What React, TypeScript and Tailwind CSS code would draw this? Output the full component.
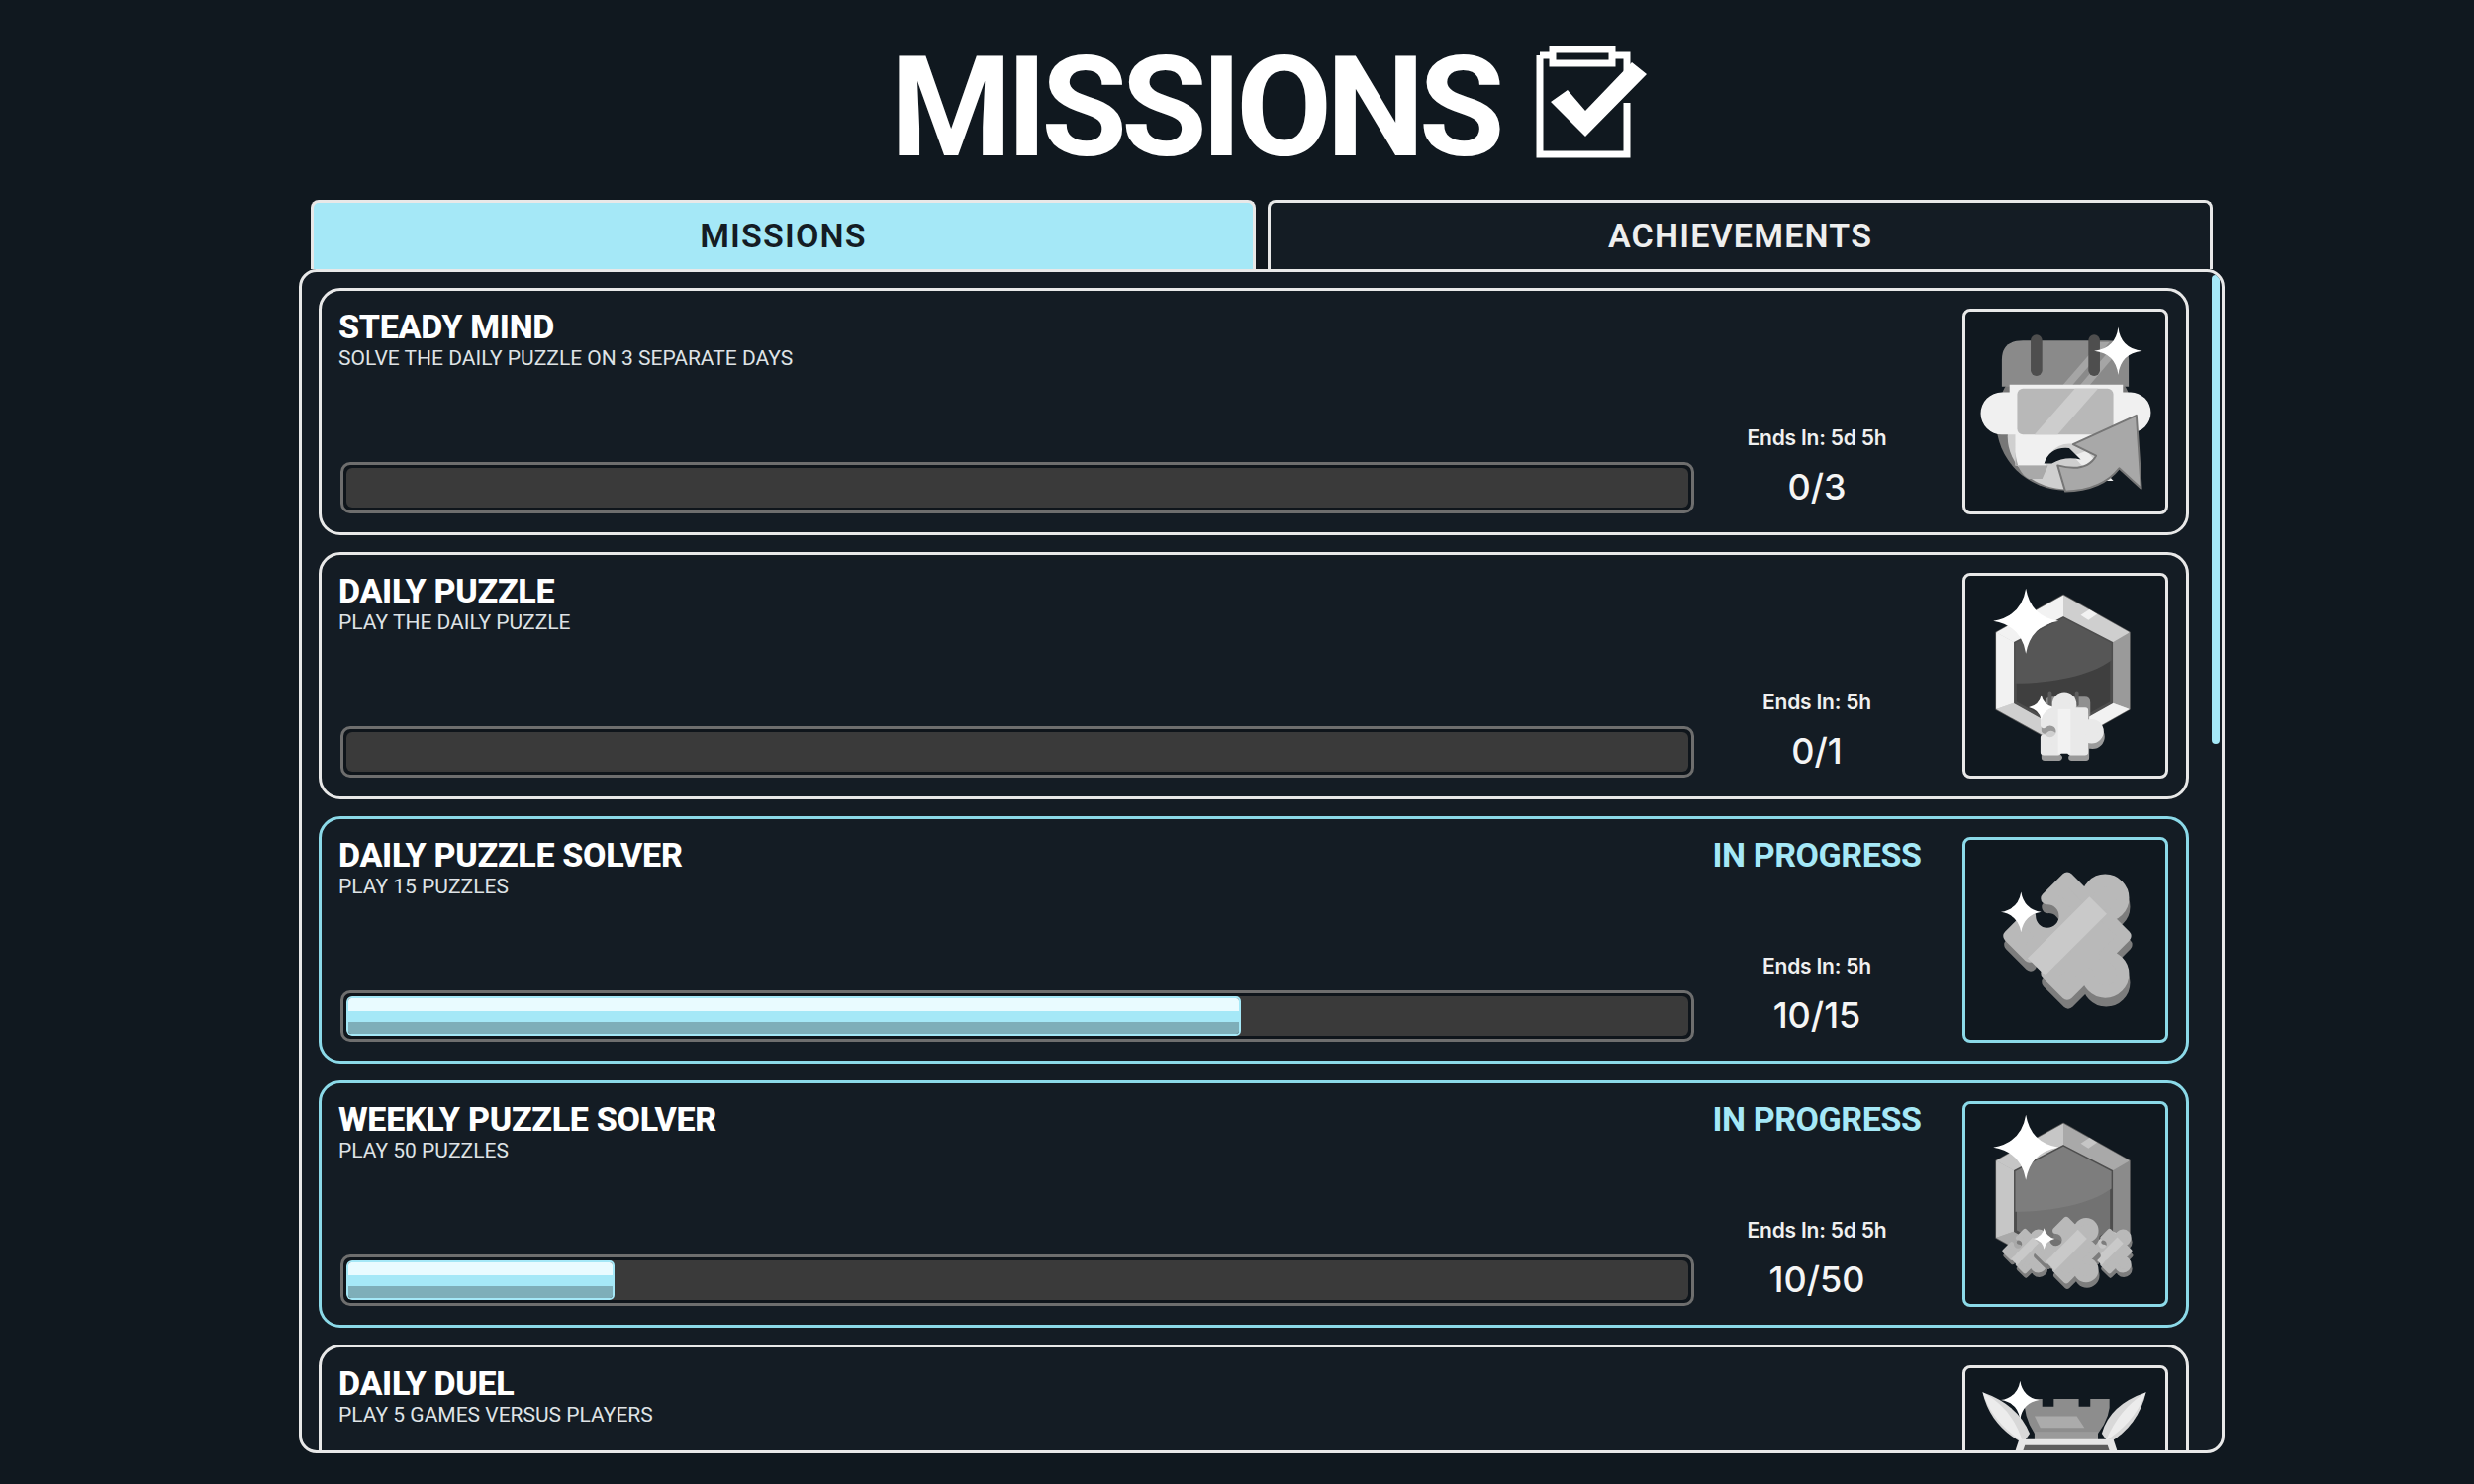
import { FunctionComponent } from "react";

const PIECE =
  "M20 30H41a13 13 0 1 1 18 0H80V51a13 13 0 1 1 0 18V90H59a13 13 0 1 0-18 0H20V69a13 13 0 1 0 0-18Z";

const Sparkle = ({ x, y, r, w = 0.14 }: { x: number; y: number; r: number; w?: number }) => {
  const c = r * w;
  return (
    <path
      fill="#fff"
      d={`M${x} ${y - r}Q${x + c} ${y - c} ${x + r} ${y}Q${x + c} ${y + c} ${x} ${y + r}Q${x - c} ${y + c} ${x - r} ${y}Q${x - c} ${y - c} ${x} ${y - r}Z`}
    />
  );
};

const Puzzle = ({
  x,
  y,
  s,
  rot = 45,
  fill = "#b9b9b9",
  side = "#7d7d7d",
  stripe = "#c9c9c9",
}: {
  x: number;
  y: number;
  s: number;
  rot?: number;
  fill?: string;
  side?: string;
  stripe?: string;
}) => (
  <g>
    <g transform={`translate(${x + 1} ${y + 5 * s + 2}) rotate(${rot}) scale(${s}) translate(-50 -60)`}>
      <path d={PIECE} fill={side} stroke={side} strokeWidth="9" strokeLinejoin="round" />
    </g>
    <g transform={`translate(${x} ${y}) rotate(${rot}) scale(${s}) translate(-50 -60)`}>
      <path d={PIECE} fill={fill} stroke={fill} strokeWidth="9" strokeLinejoin="round" />
      <path d="M41 28H59V92H41Z" fill={stripe} />
    </g>
  </g>
);

const Hexagon = ({
  rim,
  rimLight,
  rimDark,
  inner,
  gloss,
}: {
  rim: string;
  rimLight: string;
  rimDark: string;
  inner: string;
  gloss: string;
}) => (
  <g>
    <path d="M102 20L171 59V139L102 178L32 139V59Z" fill={rim} stroke="#5a5a5a" strokeWidth="1.5" strokeLinejoin="round" />
    <path d="M102 20L102 44L52 70L32 59Z" fill={rimLight} />
    <path d="M102 20L171 59L152 70L102 44Z" fill={rim} />
    <path d="M129 35L137 40L128 46L120 41Z" fill={rimLight} />
    <path d="M171 59V139L152 132V70Z" fill={rimDark} />
    <path d="M32 59V139L52 132V70Z" fill={rimLight} />
    <path d="M32 139L102 178V160L52 132Z" fill={rim} />
    <path d="M171 139L102 178V160L152 132Z" fill={rimLight} />
    <path d="M102 44L152 70V132L102 160L52 132V70Z" fill={inner} stroke="#4d4d4d" strokeWidth="3" />
    <path d="M102 44L152 70V88C130 104 90 112 52 112V70Z" fill={gloss} />
  </g>
);

const BadgeCalendar = () => (
  <svg viewBox="0 0 208 208" className="h-full w-full">
    <circle cx="104" cy="114" r="72" fill="#777777" />
    <ellipse cx="106" cy="130" rx="62" ry="55" fill="#cfcfcf" />
    <path d="M112 150L126 145L154 176H136Z" fill="#ededed" />
    <path d="M38 78V50Q38 30 60 30H148Q170 30 170 50V78Z" fill="#8a8a8a" />
    <path d="M100 78L140 32H150L110 78ZM118 78L152 38H162L128 78Z" fill="#a5a5a5" />
    <rect x="68" y="24" width="12" height="43" rx="6" fill="#4e4e4e" />
    <rect x="128" y="24" width="12" height="43" rx="6" fill="#4e4e4e" />
    <path d="M46 76H164V84H172A21 21 0 0 1 172 126H164V138L122 142A24 24 0 0 0 84 160H52V128H38A22 22 0 0 1 38 84H46Z" fill="#f0f0f0" />
    <path d="M52 146V160H86L80 174H66Q54 168 52 146Z" fill="#a9a9a9" />
    <rect x="54" y="80" width="100" height="48" rx="6" fill="#b8b8b8" />
    <path d="M72 128L114 80H138L96 128Z" fill="#cdcdcd" />
    <path d="M178 108L183 184L160 163Q142 186 104 187L96 160Q126 168 136 150L112 138Z" fill="#a8a8a8" stroke="#767676" strokeWidth="2" strokeLinejoin="round" />
    <path d="M82 158Q88 140 108 142L120 154Q104 150 90 158Z" fill="#10181f" />
    <Sparkle x={159} y={41} r={25} w={0.1} />
  </svg>
);

const BadgeHexPuzzle = () => (
  <svg viewBox="0 0 208 208" className="h-full w-full">
    <Hexagon rim="#cfcfcf" rimLight="#f2f2f2" rimDark="#9a9a9a" inner="#3f3f3f" gloss="#565656" />
    <path d="M83 146V132Q83 126 90 126H124Q130 126 130 132V146Z" fill="#8f8f8f" />
    <rect x="86" y="120" width="4" height="16" rx="2" fill="#5e5e5e" />
    <rect x="114" y="120" width="4" height="16" rx="2" fill="#5e5e5e" />
    <Puzzle x={103} y={162} s={0.72} rot={0} fill="#e9e9e9" side="#9a9a9a" stripe="#f2f2f2" />
    <Sparkle x={79} y={137} r={13} w={0.18} />
    <Sparkle x={63} y={47} r={34} w={0.14} />
  </svg>
);

const BadgePuzzle = () => (
  <svg viewBox="0 0 208 208" className="h-full w-full">
    <Puzzle x={106} y={100} s={1.42} />
    <Sparkle x={58} y={75} r={21} />
  </svg>
);

const BadgeHexPuzzles = () => (
  <svg viewBox="0 0 208 208" className="h-full w-full">
    <Hexagon rim="#a9a9a9" rimLight="#c6c6c6" rimDark="#8b8b8b" inner="#727272" gloss="#7d7d7d" />
    <Puzzle x={62} y={153} s={0.5} />
    <Puzzle x={150} y={153} s={0.5} />
    <Puzzle x={105} y={152} s={0.74} />
    <Sparkle x={82} y={140} r={11} w={0.18} />
    <Sparkle x={63} y={45} r={34} w={0.14} />
  </svg>
);

const BadgeTower = () => (
  <svg viewBox="0 0 208 208" className="h-full w-full">
    <path d="M18 25Q55 38 67 68L60 78Q26 60 18 25Z" fill="#d8d8d8" />
    <path d="M18 25Q50 42 60 78L48 68Q26 50 18 25Z" fill="#ececec" />
    <path d="M188 25Q150 38 142 68L149 78Q180 60 188 25Z" fill="#d8d8d8" />
    <path d="M188 25Q160 42 146 76L154 70Q178 52 188 25Z" fill="#ececec" />
    <path d="M62 32H80V40H92V32H118V40H130V32H150Q152 50 138 68H72Q60 50 62 32Z" fill="#8d8d8d" />
    <path d="M72 50H116L124 62H78Z" fill="#ababab" />
    <rect x="72" y="66" width="66" height="10" fill="#9a9a9a" />
    <path d="M56 74H154L160 92H50Z" fill="#e6e6e6" />
    <path d="M62 80H148L152 92H58Z" fill="#5d5d5d" />
    <Sparkle x={57} y={33} r={20} />
  </svg>
);

type Mission = {
  title: string;
  desc: string;
  ends: string;
  done: number;
  total: number;
  active?: boolean;
  badge: FunctionComponent;
};

const missions: Mission[] = [
  { title: "STEADY MIND", desc: "SOLVE THE DAILY PUZZLE ON 3 SEPARATE DAYS", ends: "Ends In: 5d 5h", done: 0, total: 3, badge: BadgeCalendar },
  { title: "DAILY PUZZLE", desc: "PLAY THE DAILY PUZZLE", ends: "Ends In: 5h", done: 0, total: 1, badge: BadgeHexPuzzle },
  { title: "DAILY PUZZLE SOLVER", desc: "PLAY 15 PUZZLES", ends: "Ends In: 5h", done: 10, total: 15, active: true, badge: BadgePuzzle },
  { title: "WEEKLY PUZZLE SOLVER", desc: "PLAY 50 PUZZLES", ends: "Ends In: 5d 5h", done: 10, total: 50, active: true, badge: BadgeHexPuzzles },
  { title: "DAILY DUEL", desc: "PLAY 5 GAMES VERSUS PLAYERS", ends: "Ends In: 5h", done: 0, total: 5, badge: BadgeTower },
];

const ProgressBar = ({ value }: { value: number }) => (
  <div className="h-[52px] flex-1 rounded-[10px] border-[3px] border-[#6e6e6e] bg-[#0f151b] p-[3px]">
    <div className="h-full overflow-hidden rounded-[6px] bg-[#3a3a3a]">
      {value > 0 && (
        <div
          className="flex h-full flex-col overflow-hidden rounded-[5px] border-2 border-[#a5e8f7]"
          style={{ width: `${value}%` }}
        >
          <div className="h-[13px] bg-[#e9fbff]" />
          <div className="flex-1 bg-[#a5e8f7]" />
          <div className="h-[12px] bg-[#7eaeb9]" />
        </div>
      )}
    </div>
  </div>
);

const MissionCard = ({ mission }: { mission: Mission }) => {
  const Badge = mission.badge;
  const border = mission.active ? "border-[#8bd9e8]" : "border-[#e8e8e8]";
  return (
    <div className={`flex h-[250px] shrink-0 rounded-[22px] border-[3px] bg-[#141c24] pl-[17px] pr-[18px] pt-[18px] pb-[18px] ${border}`}>
      <div className="flex min-w-0 flex-1 flex-col justify-between">
        <div className="flex justify-between pt-[1px]">
          <div>
            <div className="font-['Roboto'] text-[34px] font-extrabold leading-[34px] tracking-[-0.3px] text-white">{mission.title}</div>
            <div className="mt-[3px] font-['Roboto'] text-[21px] leading-[24px] text-[#dfe3e6]">{mission.desc}</div>
          </div>
          <div className="w-[212px] whitespace-nowrap text-center font-['Roboto'] text-[34px] font-bold leading-[34px] tracking-[-0.4px] text-[#a5e8f7]">
            {mission.active && "IN PROGRESS"}
          </div>
        </div>
        <div className="flex items-end gap-[18px] pb-[1px] pl-[2px]">
          <ProgressBar value={(mission.done / mission.total) * 100} />
          <div className="flex w-[212px] flex-col items-center">
            <div className="font-['Inter'] text-[21px] font-semibold leading-[24px] tracking-[-0.2px] text-[#f0f0f0]">{mission.ends}</div>
            <div className="mt-[17px] mb-[7px] h-[40px] font-['Inter'] text-[36px] font-medium leading-[40px] text-[#f5f5f5]">
              {mission.done}/{mission.total}
            </div>
          </div>
        </div>
      </div>
      <div className={`ml-[41px] h-[208px] w-[208px] shrink-0 rounded-[8px] border-[3px] bg-[#10181f] ${border}`}>
        <Badge />
      </div>
    </div>
  );
};

export default function App() {
  return (
    <div className="flex h-[1500px] w-[2500px] flex-col items-center overflow-hidden bg-[#10181f] pl-[50px]">
      <div className="flex h-[202px] w-full shrink-0 items-start justify-center pl-[14px]">
        <h1 className="mt-[31px] font-['Roboto'] text-[141px] font-bold leading-[155px] tracking-[-6px] text-white">
          MISSIONS
        </h1>
        <svg viewBox="0 0 113 114" className="ml-[37px] mt-[46px] h-[114px] w-[113px]" aria-hidden="true">
          <path d="M4 10V110H92V58M92 26V10H4" fill="none" stroke="#fff" strokeWidth="7" />
          <rect x="17" y="4" width="60" height="14" fill="#10181f" stroke="#fff" strokeWidth="7" />
          <path d="M15 57L32 45L50 66L97 17L112 29L50 92Z" fill="#fff" />
        </svg>
      </div>
      <div className="flex h-[70px] w-[1922px] shrink-0 gap-[12px]">
        <div className="flex flex-1 items-center justify-center rounded-t-[8px] border-[3px] border-b-0 border-[#e8e8e8] bg-[#a5e8f7] font-['Roboto'] text-[34px] font-semibold tracking-[1.2px] text-[#141c24]">
          MISSIONS
        </div>
        <div className="flex flex-1 items-center justify-center rounded-t-[8px] border-[3px] border-b-0 border-[#e8e8e8] bg-[#141c24] font-['Roboto'] text-[34px] font-semibold tracking-[1.2px] text-[#eeeeee]">
          ACHIEVEMENTS
        </div>
      </div>
      <div className="relative h-[1197px] w-[1946px] shrink-0 overflow-hidden rounded-[18px] border-[3px] border-[#e8e8e8] bg-[#141c24]">
        <div className="flex flex-col gap-[17px] pl-[17px] pr-[33px] pt-[16px]">
          {missions.map((m) => (
            <MissionCard key={m.title} mission={m} />
          ))}
        </div>
        <div className="absolute right-[2px] top-[3px] h-[474px] w-[8px] rounded-full bg-[#a5e8f7]" />
      </div>
    </div>
  );
}
